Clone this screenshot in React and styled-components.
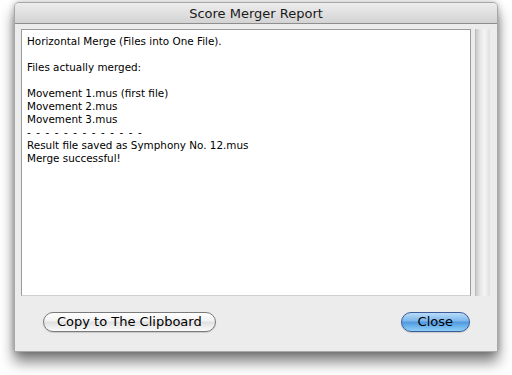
import React from 'react'
import styled, { createGlobalStyle } from 'styled-components'

const GlobalStyle = createGlobalStyle`
  html, body {
    margin: 0;
    padding: 0;
    background: #ffffff;
  }
  body {
    font-family: "Lucida Grande", "DejaVu Sans", "Liberation Sans", sans-serif;
  }
`

const Page = styled.div`
  width: 512px;
  height: 375px;
  padding: 2px 0 0 14px;
  box-sizing: border-box;
`

const Window = styled.div`
  width: 484px;
  height: 350px;
  display: flex;
  flex-direction: column;
  background: #ececec;
  border: 1px solid #a8a8a8;
  border-radius: 5px 5px 0 0;
  box-sizing: border-box;
  box-shadow: 0 10px 14px rgba(0, 0, 0, 0.5), 0 0 6px rgba(0, 0, 0, 0.25);
  overflow: hidden;
`

const TitleBar = styled.div`
  height: 20px;
  flex: none;
  display: flex;
  align-items: center;
  justify-content: center;
  background: linear-gradient(#ededed, #d3d3d3);
  border-bottom: 1px solid #8e8e8e;
  font-size: 13px;
  color: #1a1a1a;
`

const Body = styled.div`
  flex: 1;
  display: flex;
  flex-direction: column;
  padding: 5px 7px 19px 6px;
`

const TextRow = styled.div`
  flex: 1;
  display: flex;
  gap: 4px;
`

const TextArea = styled.div`
  flex: 1;
  background: #ffffff;
  border: 1px solid #9a9a9a;
  border-bottom-color: #cfcfcf;
  padding: 5px 5px;
  font-size: 10.4px;
  line-height: 12.95px;
  color: #000;
  white-space: pre;
`

const Divider = styled.span`
  letter-spacing: 1.1px;
`

const ScrollTrack = styled.div`
  width: 14px;
  background: linear-gradient(90deg, #cacaca, #e6e6e6 30%, #f4f4f4 60%, #e0e0e0);
  border-left: 1px solid #bcbcbc;
`

const ButtonRow = styled.div`
  flex: none;
  display: flex;
  justify-content: space-between;
  padding: 16px 20px 0 22px;
`

const Button = styled.button`
  height: 20px;
  padding: 0 ${p => p.$pad}px;
  border-radius: 10px;
  font-family: inherit;
  font-size: 13px;
  color: #000;
  border: 1px solid ${p => (p.$primary ? '#3b5c98' : '#7a7a7a')};
  background: ${p =>
    p.$primary
      ? 'linear-gradient(#b9dcf7 0%, #7bb6ec 45%, #4f98e0 50%, #8dd0f8 100%)'
      : 'linear-gradient(#ffffff 0%, #f2f2f2 45%, #e0e0e0 50%, #fbfbfb 100%)'};
  box-shadow: 0 1px 1px rgba(0, 0, 0, 0.15);
  line-height: 18px;
`

const header = `Horizontal Merge (Files into One File).

Files actually merged:

Movement 1.mus (first file)
Movement 2.mus
Movement 3.mus
`

const footer = `
Result file saved as Symphony No. 12.mus
Merge successful!`

export default function App() {
  return (
    <>
      <GlobalStyle />
      <Page>
        <Window>
          <TitleBar>Score Merger Report</TitleBar>
          <Body>
            <TextRow>
              <TextArea>
                {header}
                <Divider>- - - - - - - - - - - - -</Divider>
                {footer}
              </TextArea>
              <ScrollTrack />
            </TextRow>
            <ButtonRow>
              <Button $pad={13}>Copy to The Clipboard</Button>
              <Button $primary $pad={16}>Close</Button>
            </ButtonRow>
          </Body>
        </Window>
      </Page>
    </>
  )
}
